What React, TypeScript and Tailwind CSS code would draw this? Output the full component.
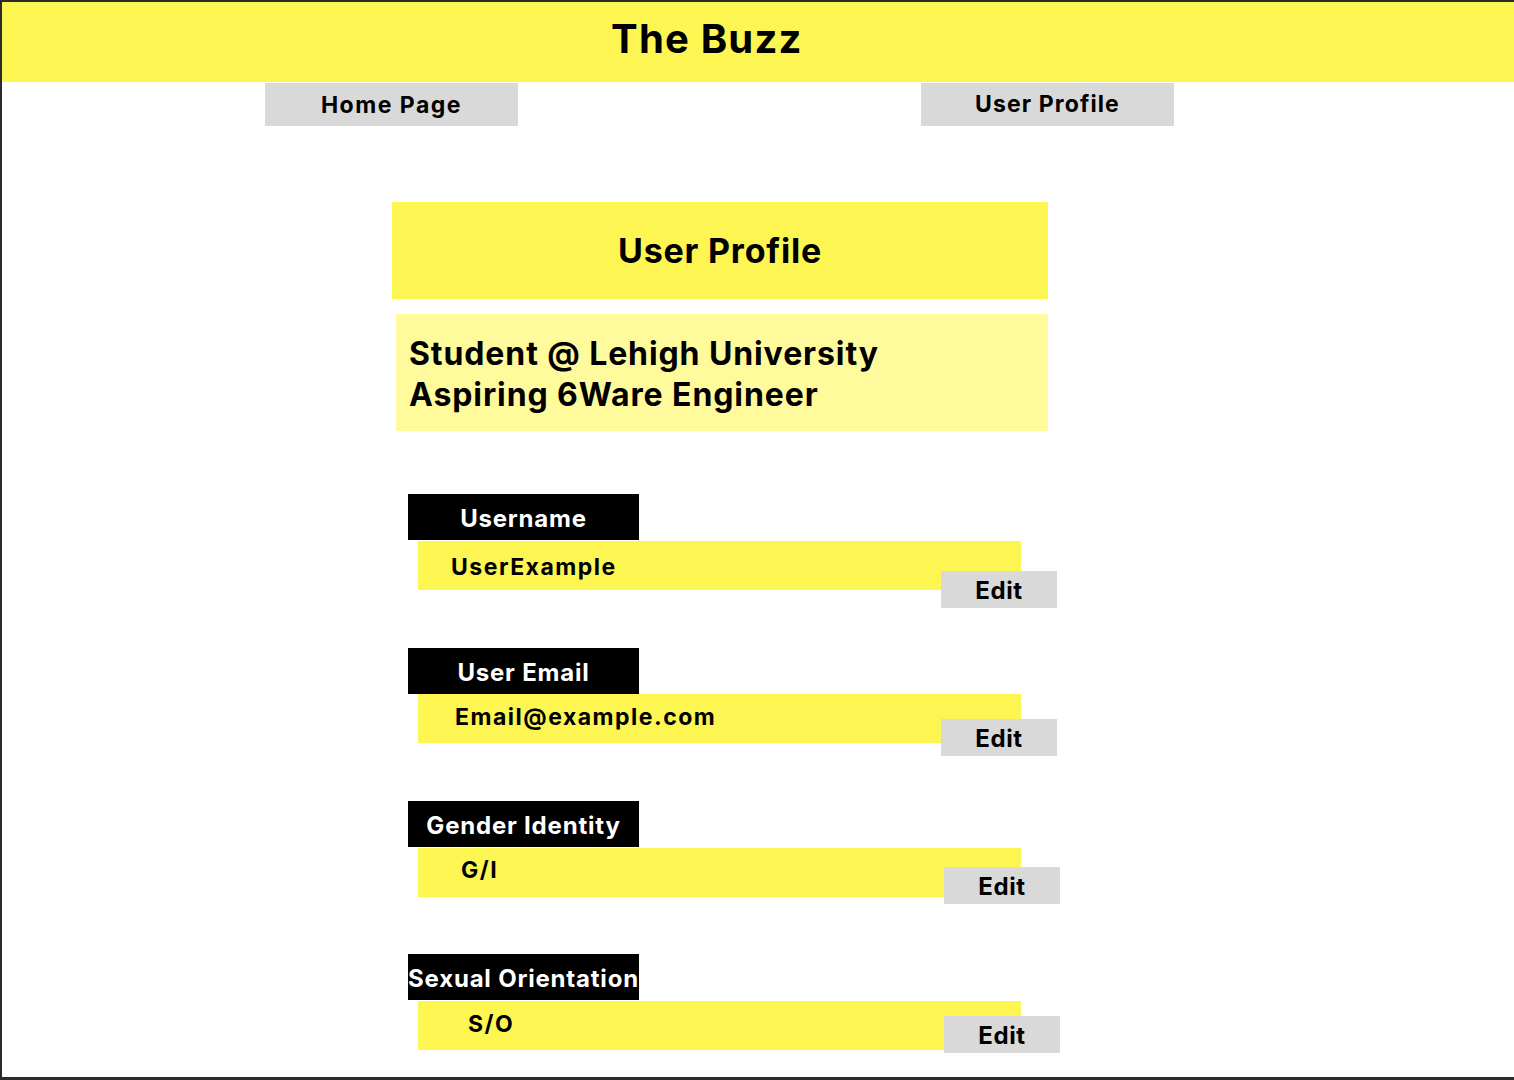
const yellow = "bg-[#fdf552]";

type Field = {
  label: string;
  value: string;
  gapClass: string;
  valueClass: string;
  editClass: string;
};

const fields: Field[] = [
  {
    label: "Username",
    value: "UserExample",
    gapClass: "mt-[63px]",
    valueClass: "mt-[1px] pl-[33px] pt-[4px]",
    editClass: "left-[523px] top-[30px]",
  },
  {
    label: "User Email",
    value: "Email@example.com",
    gapClass: "mt-[58px]",
    valueClass: "pl-[37px] pb-[3px]",
    editClass: "left-[523px] top-[25px]",
  },
  {
    label: "Gender Identity",
    value: "G/I",
    gapClass: "mt-[58px]",
    valueClass: "mt-[1px] pl-[43px] pb-[5px]",
    editClass: "left-[526px] top-[19px]",
  },
  {
    label: "Sexual Orientation",
    value: "S/O",
    gapClass: "mt-[57px]",
    valueClass: "mt-[1px] pl-[50px] pb-[3px]",
    editClass: "left-[526px] top-[15px]",
  },
];

function ProfileField({ field }: { field: Field }) {
  return (
    <div className={field.gapClass}>
      <div className="ml-[16px] flex h-[46px] w-[231px] items-center justify-center whitespace-nowrap bg-black pt-[3px] text-[24px] font-bold tracking-[0.8px] text-white">
        {field.label}
      </div>
      <div
        className={`relative ml-[26px] flex h-[49px] w-[603px] items-center ${yellow} text-[23px] font-bold tracking-[1.5px] text-black ${field.valueClass}`}
      >
        {field.value}
        <button
          className={`absolute ${field.editClass} flex h-[37px] w-[116px] items-center justify-center bg-[#d9d9d9] pt-[2px] text-[24px] font-bold tracking-[0.6px] text-black`}
        >
          Edit
        </button>
      </div>
    </div>
  );
}

export default function App() {
  return (
    <div className="box-border h-[1080px] w-[1514px] overflow-hidden border-b-[3px] border-l-2 border-t-2 border-[#2b2b2b] bg-white font-['Inter',sans-serif] text-black">
      <header className={`flex h-[80px] items-center pb-[6px] pl-[609px] ${yellow}`}>
        <h1 className="text-[40px] font-bold leading-none tracking-[1.2px]">The Buzz</h1>
      </header>

      <nav className="flex pl-[263px] pt-[1px]">
        <button className="flex h-[43px] w-[253px] items-center justify-center bg-[#d9d9d9] pt-[2px] text-[23px] font-bold tracking-[1.5px]">
          Home Page
        </button>
        <button className="ml-[403px] flex h-[43px] w-[253px] items-center justify-center bg-[#d9d9d9] text-[23px] font-bold tracking-[1.1px]">
          User Profile
        </button>
      </nav>

      <main className="mt-[76px] pl-[390px]">
        <div className={`flex h-[97px] w-[656px] items-center justify-center ${yellow} text-[34px] font-bold tracking-[0.8px]`}>
          User Profile
        </div>
        <div className="ml-[4px] mt-[15px] h-[117px] w-[652px] bg-[#fffa9c] pl-[13px] pt-[19px] text-[32px] font-bold leading-[41px] tracking-[0.9px]">
          <p>Student @ Lehigh University</p>
          <p>Aspiring 6Ware Engineer</p>
        </div>

        {fields.map((f) => (
          <ProfileField key={f.label} field={f} />
        ))}
      </main>
    </div>
  );
}
